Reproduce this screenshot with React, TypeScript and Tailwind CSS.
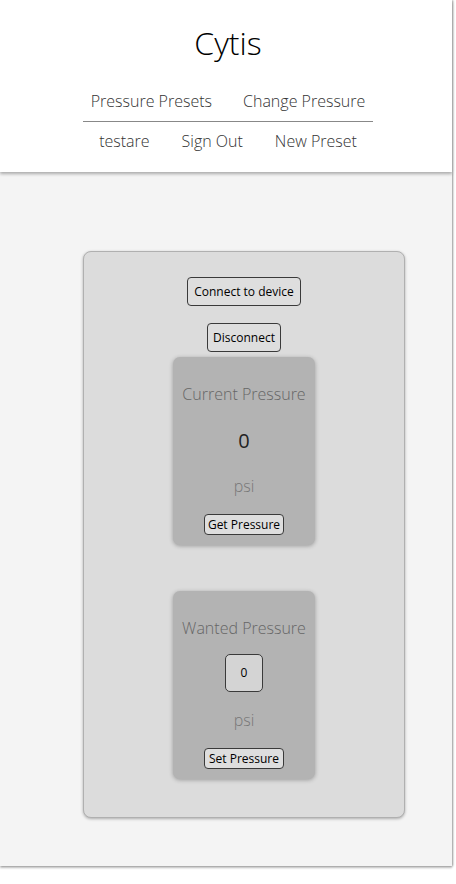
import React from "react";

const btn =
  "border border-[#3a3a3a] rounded-[4px] bg-[#dedede] text-black text-[12px] leading-none font-['Open_Sans',sans-serif]";

function PressureCard({ title, children, button }: { title: string; children: React.ReactNode; button: string }) {
  return (
    <div className="w-[142px] h-[188px] bg-[#b3b3b3] rounded-[7px] shadow-[0_1px_4px_rgba(0,0,0,0.3)] flex flex-col items-center">
      <div className="mt-[26px] h-[22px] leading-[22px] text-[16px] font-light text-[#666]">{title}</div>
      {children}
      <button className={`${btn} w-[80px] h-[21px] mt-[auto] mb-[10px] px-0`}>{button}</button>
    </div>
  );
}

export default function App() {
  return (
    <div className="w-[456px] h-[884px] bg-white font-['Open_Sans',sans-serif]">
      <div className="w-[452px] h-[866px] shadow-[1px_0_2px_rgba(0,0,0,0.35)] flex flex-col">
        <header className="relative z-10 h-[172px] bg-white shadow-[0_2px_3px_rgba(0,0,0,0.3)] flex flex-col items-center pl-[4px]">
          <h1 className="mt-[21px] text-[32px] leading-[44px] font-light text-black">Cytis</h1>
          <div className="mt-[25px] flex gap-[31px] text-[16px] leading-[22px] font-light text-[#333]">
            <span>Pressure Presets</span>
            <span>Change Pressure</span>
          </div>
          <div className="mt-[9px] w-[290px] h-px bg-[#888]" />
          <div className="mt-[8px] flex gap-[32px] text-[16px] leading-[22px] font-light text-[#333]">
            <span>testare</span>
            <span>Sign Out</span>
            <span>New Preset</span>
          </div>
        </header>
        <main className="flex-1 bg-[#f4f4f4] shadow-[0_2px_2px_rgba(0,0,0,0.25)]">
          <div className="ml-[83px] mt-[79px] w-[322px] h-[567px] bg-[#dcdcdc] rounded-[8px] border border-[#b0b0b0] shadow-[0_1px_3px_rgba(0,0,0,0.3)] flex flex-col items-center">
            <button className={`${btn} mt-[25px] w-[114px] h-[29px]`}>Connect to device</button>
            <button className={`${btn} mt-[17px] w-[74px] h-[29px]`}>Disconnect</button>
            <div className="mt-[5px]">
              <PressureCard title="Current Pressure" button="Get Pressure">
                <div className="mt-[24px] text-[20px] leading-[24px] text-[#222]">0</div>
                <div className="mt-[22px] text-[16px] leading-[22px] font-light text-[#777]">psi</div>
              </PressureCard>
            </div>
            <div className="mt-[46px]">
              <PressureCard title="Wanted Pressure" button="Set Pressure">
                <div className="mt-[15px] w-[38px] h-[38px] rounded-[5px] border border-[#3a3a3a] bg-[#d4d4d4] flex items-center justify-center text-[12px] text-black">0</div>
                <div className="mt-[17px] text-[16px] leading-[22px] font-light text-[#777]">psi</div>
              </PressureCard>
            </div>
          </div>
        </main>
      </div>
    </div>
  );
}
